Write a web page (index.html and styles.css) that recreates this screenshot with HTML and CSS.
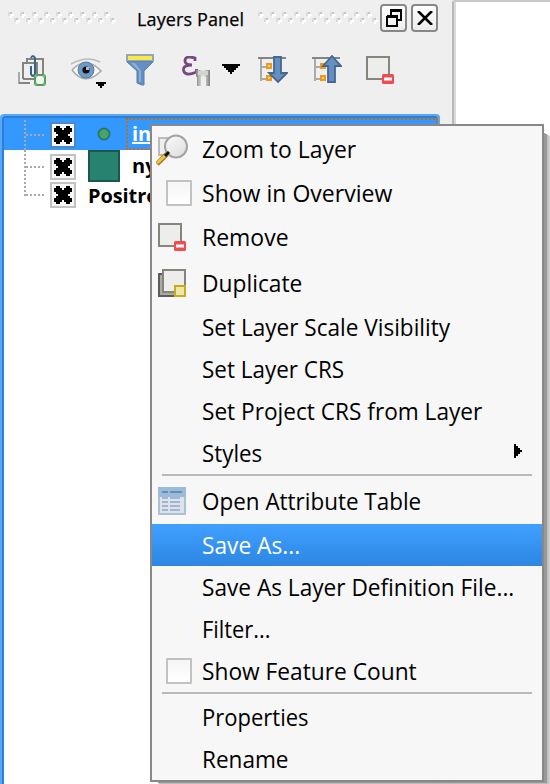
FILE: index.html
```html
<!DOCTYPE html>
<html lang="en">
<head>
<meta charset="utf-8">
<title>Layers Panel</title>
<link rel="stylesheet" href="styles.css">
</head>
<body>
<svg class="defs" width="0" height="0" aria-hidden="true">
  <defs>
    <pattern id="grip" width="12" height="12" patternUnits="userSpaceOnUse">
      <path fill="#fff" d="M2 2h4v2h-2v2h-2zM8 8h4v2h-2v2h-2z"/>
      <path fill="#dcdcdc" d="M0 0h4v2h-2v2h-2zM6 6h4v2h-2v2h-2z"/>
      <path fill="#c6c6c6" d="M2 0h2v2h-2zM8 6h2v2h-2z"/>
    </pattern>
    <linearGradient id="lens" x2="1" y2="1"><stop stop-color="#fafafa"/><stop offset="1" stop-color="#dcdcdc"/></linearGradient>
    <linearGradient id="metal"><stop stop-color="#888880"/><stop offset=".5" stop-color="#eee"/><stop offset="1" stop-color="#808078"/></linearGradient>
    <symbol id="cross" viewBox="0 0 18 18">
      <path d="M2 0h4v2h2v2h2V2h2V0h4v2h2v4h-2v2h-2v2h2v2h2v4h-2v2h-4v-2h-2v-2H8v2H6v2H2v-2H0v-4h2v-2h2V8H2V6H0V2h2z"/>
    </symbol>
    <symbol id="remove" viewBox="0 0 28 28">
      <path fill="#ededeb" stroke="#85857d" stroke-width="2" d="M1 1h22v22H1z"/>
      <rect x="16" y="18" width="12" height="10" rx="1.5" fill="#f04b50"/>
      <path fill="#fff" d="M18 21.5h8v3h-8z"/>
    </symbol>
    <symbol id="tree" viewBox="0 0 30 30">
      <path fill="none" stroke="#aaa" stroke-width="2" d="M3 4v22M3 12h6M3 24h6"/>
      <path stroke="#85857d" stroke-width="2" d="M0 3h28"/>
      <path fill="#fbdc4c" stroke="#f49522" stroke-width="2" d="M9 9h4v4H9zM9 21h4v4H9z"/>
    </symbol>
  </defs>
</svg>

<main class="window">
  <section class="panel">
    <header class="titlebar">
      <svg class="grip-left" width="108" height="12"><path fill="url(#grip)" d="M0 0h108v12H0z"/></svg>
      <h1 class="title"><span>Layers Panel</span></h1>
      <svg class="grip-right" width="120" height="12"><path fill="url(#grip)" d="M0 0h120v12H0z"/></svg>
      <div class="window-buttons">
        <button class="window-button" aria-label="Float"><svg width="16" height="18" fill="none" stroke="#000" stroke-width="2"><path d="M5 7V1h10v10h-4M1 9v8h10V7H1M4 2h12M0 8h12" /></svg></button>
        <button class="window-button" aria-label="Close"><svg width="16" height="14" stroke="#000" stroke-width="2.6"><path d="M1 0l14 14M15 0L1 14"/></svg></button>
      </div>
    </header>

    <div class="toolbar">
      <svg class="tool-group" width="28" height="32" fill="none" stroke="#858580" stroke-width="2">
        <path stroke="#aaa" d="M1 18v11h11"/><path d="M1 29h11M5 25V9h14v16H5M9 9V5h16v16"/>
        <path stroke="#36618e" d="M13 12v8q2 4 4 0V4q-2-4-4 0M17 4v17"/>
        <rect x="17" y="21" width="10" height="10" rx="2" fill="#f0f7f0" stroke="#559d59"/>
        <path stroke="#81b884" d="M17 21l2 2M27 21l-2 2M17 31l2-2M27 31l-2-2"/>
      </svg>
      <svg class="tool-eye" width="36" height="30">
        <path fill="#fff" stroke="#aaa9a4" stroke-width="1.7" d="M1 12Q15-3 30 13Q14 29 1 12"/>
        <path fill="none" stroke="#bcbbb5" stroke-width="1.6" d="M0 6Q16-3 29 4"/>
        <circle cx="15" cy="12" r="8" fill="#6c9bcb" stroke="#537ba6"/><circle cx="15" cy="12" r="3.6" fill="#111"/><path fill="#bbb" d="M15 9h3v3h-3z"/>
        <path d="M25 24h10v2h-2v2h-2v2h-2v-2h-2v-2h-2z"/>
      </svg>
      <svg class="tool-filter" width="28" height="32">
        <path fill="#648fc0" stroke="#557fac" d="M1 7h26v1L18 17v14h-2l-5-2V17L1 8z"/>
        <path fill="#8eb0d5" d="M5 9l8 8v11h2V17L9 9z"/><path fill="#96a8b4" d="M0 0h28v7H0z"/><path fill="#f8e84e" d="M2 2h24v4H2z"/>
      </svg>
      <svg class="tool-expression" width="28" height="30">
        <path fill="none" stroke="#77477f" stroke-width="2.8" d="M13 5V2Q3-1 3 5q0 4 7 4Q1 9 1.5 14q1 7 13 2v-3"/>
        <path fill="url(#metal)" d="M14 14h14v16h-4V21h-5v9h-4v-9h-1z"/><path fill="#d4d4cf" d="M16 15h10v4H16z"/>
      </svg>
      <svg class="tool-arrow" width="18" height="10"><path d="M0 0h18v2h-2v2h-2v2h-2v2h-2v2H8V8H6V6H4V4H2V2H0z"/></svg>
      <svg class="tool-expand" width="30" height="30"><use href="#tree" width="30" height="30"/><path fill="#648fc0" stroke="#45688e" stroke-width="1.8" d="M16 2h7v16h6l-9 9-9-9h5z"/></svg>
      <svg class="tool-collapse" width="30" height="30"><use href="#tree" width="30" height="30"/><path fill="#648fc0" stroke="#45688e" stroke-width="1.8" d="M16 27h7V11h6l-9-10-9 10h5z"/></svg>
      <svg class="tool-remove" width="28" height="28"><use href="#remove"/></svg>
    </div>

    <div class="layers">
      <div class="layer layer-selected">
        <svg class="branch" width="42" height="32" stroke="#a9a9a9" stroke-width="2" stroke-dasharray="2 2"><path d="M21 2v30M22 17h20"/></svg>
        <span class="checkbox"><svg width="18" height="18"><use href="#cross"/></svg></span>
        <svg class="point" width="14" height="14"><circle cx="7" cy="7" r="5.6" fill="#4aa564" stroke="#27756e" stroke-width="1.8"/></svg>
        <span class="name name-edit">in</span>
      </div>
      <div class="layer">
        <svg class="branch" width="42" height="32" stroke="#a9a9a9" stroke-width="2" stroke-dasharray="2 2"><path d="M21 0v32M22 17h20"/></svg>
        <span class="checkbox"><svg width="18" height="18"><use href="#cross"/></svg></span>
        <span class="swatch"></span>
        <span class="name name-polygon">ny</span>
      </div>
      <div class="layer layer-short">
        <svg class="branch" width="42" height="28" stroke="#a9a9a9" stroke-width="2" stroke-dasharray="2 2"><path d="M21 0v14M22 13h20"/></svg>
        <span class="checkbox"><svg width="18" height="18"><use href="#cross"/></svg></span>
        <span class="name name-base">Positron</span>
      </div>
    </div>
  </section>
  <section class="canvas"></section>
</main>

<nav class="menu">
  <div class="item item-icon">
    <svg class="icon icon-zoom" width="32" height="32"><path fill="#eee" stroke="#bbb" stroke-width="2" d="M3 4h16v17H3z"/><path stroke="#a77c28" stroke-width="5" d="M1 30l10-10"/><path stroke="#f3c541" stroke-width="3" d="M1 29l10-9"/><circle cx="20" cy="12.5" r="11" fill="url(#lens)" stroke="#a3a3a3" stroke-width="2"/><path stroke="#111" stroke-width="3" d="M9 22l4-4"/></svg>
    <span class="label l1">Zoom to Layer</span></div>
  <div class="item"><span class="menu-check"></span><span class="label l2">Show in Overview</span></div>
  <div class="item item-icon"><svg class="icon" width="28" height="28"><use href="#remove"/></svg><span class="label l3">Remove</span></div>
  <div class="item item-icon">
    <svg class="icon" width="28" height="28"><path fill="#a9aaa0" stroke="#5d5d57" stroke-width="2" d="M1 5h20v22H1z"/><path stroke="#85857d" stroke-width="2" fill="#ededeb" d="M5 1h22v22H5z"/><path fill="#eee7aa" stroke="#c9a91d" stroke-width="2" d="M17 17h10v10H17z"/></svg>
    <span class="label l4">Duplicate</span></div>
  <div class="item"><span class="label l5">Set Layer Scale Visibility</span></div>
  <div class="item"><span class="label l6">Set Layer CRS</span></div>
  <div class="item"><span class="label l7">Set Project CRS from Layer</span></div>
  <div class="item"><span class="label l8">Styles</span><svg class="submenu" width="8" height="14"><path d="M0 0h2v2h2v2h2v2h2v2H6v2H4v2H2v2H0z"/></svg></div>
  <div class="separator"></div>
  <div class="item item-icon">
    <svg class="icon" width="28" height="28"><rect width="28" height="28" rx="1" fill="#a8c0da"/><path fill="#9bbbd9" d="M0 0h28v10H0z"/><path fill="#dfe3e8" d="M2 10h24v16H2z"/><path stroke="#6290c1" stroke-width="2" d="M4 5h6m2 0h12"/><path stroke="#9eb7d4" stroke-width="2" d="M4 11h6m2 0h10M4 15h6m2 0h10M4 19h6m2 0h10M4 23h6m2 0h10"/></svg>
    <span class="label l9">Open Attribute Table</span></div>
  <div class="item item-active"><span class="label l10">Save As...</span></div>
  <div class="item"><span class="label l11">Save As Layer Definition File...</span></div>
  <div class="item"><span class="label l12">Filter...</span></div>
  <div class="item"><span class="menu-check"></span><span class="label l13">Show Feature Count</span></div>
  <div class="separator"></div>
  <div class="item"><span class="label l14">Properties</span></div>
  <div class="item"><span class="label l15">Rename</span></div>
</nav>
</body>
</html>
```
FILE: styles.css
```css
* { box-sizing: border-box; }
body { margin: 0; width: 550px; height: 784px; overflow: hidden; position: relative; background: #efefef; color: #000; font-family: "Open Sans", "Noto Sans", sans-serif; }
svg { display: block; flex: none; }
.defs { position: absolute; }
.window { display: flex; height: 784px; }
.panel { width: 452px; display: flex; flex-direction: column; flex: none; }
.canvas { flex: 1; background: #fff; border-left: 2px solid #b8b8b8; border-top: 2px solid #c8c8c8; border-top-left-radius: 3px; box-shadow: inset 2px 0 #dadada; }

.titlebar { height: 38px; display: flex; align-items: flex-start; padding-left: 8px; }
.grip-left, .grip-right { margin-top: 12px; }
.title { margin: 5px 0 0 21px; width: 121px; font-size: 18px; line-height: 28px; font-weight: 400; white-space: nowrap; }
.title span { display: inline-block; letter-spacing: .12px; -webkit-text-stroke: .25px #000; }
.window-buttons { display: flex; gap: 4px; margin: 4px 0 0 2px; }
.window-button { width: 27px; height: 28px; padding: 0; display: flex; align-items: center; justify-content: center; border: 2px solid #888; border-radius: 4px; background: linear-gradient(#fff, #ececec); }

.toolbar { height: 76px; display: flex; align-items: flex-start; padding: 16px 0 0 18px; }
.tool-eye { margin: 4px 0 0 25px; }
.tool-filter { margin-left: 19px; }
.tool-expression { margin: 2px 0 0 28px; }
.tool-arrow { margin: 10px 0 0 12px; }
.tool-expand { margin: 1px 0 0 18px; }
.tool-collapse { margin: 1px 0 0 24px; }
.tool-remove { margin: 2px 0 0 24px; }

.layers { width: 440px; flex: 1; background: #fff; border: 2px solid #59a7fa; border-bottom: 0; border-radius: 4px 4px 0 0; box-shadow: inset 2px 2px #2d7fd5; padding: 2px 0 0 2px; }
.layer { display: flex; align-items: center; height: 32px; white-space: nowrap; font-weight: 700; font-size: 20px; line-height: 28px; }
.layer-short { height: 28px; }
.layer-selected { background: #39f; color: #fff; }
.branch { fill: none; }
.checkbox { width: 26px; height: 26px; margin: 2px 0 0 4px; flex: none; display: flex; align-items: center; justify-content: center; background: #f6f6f6; border: 2px solid #c2c2c2; }
.layer-short .checkbox { margin-top: -2px; }
.layer-selected .checkbox { border-color: #4b88c7; }
.point { margin: 0 0 0 21px; }
.swatch { width: 32px; height: 32px; margin-left: 12px; flex: none; background: #27826f; border: 2px solid #17594d; }
.name-edit { margin-left: 15px; width: 312px; height: 32px; padding-left: 4px; border: 2px dotted #c96a12; text-decoration: underline; text-decoration-thickness: 2px; }
.name-polygon { margin-left: 12px; }
.name-base { margin-left: 12px; letter-spacing: -.1px; }

.menu { position: absolute; left: 150px; top: 124px; width: 394px; height: 658px; border: 2px solid #888; background: #f7f7f7; box-shadow: 4px 2px 0 -1px #999, 6px 4px 3px #bbb; clip-path: polygon(-2px -2px, 394px -2px, 394px 9px, 402px 13px, 402px 664px, 10px 664px, 8px 658px, -2px 658px); }
.item { position: relative; height: 42px; padding-left: 50px; display: flex; align-items: center; font-size: 24px; line-height: 36px; white-space: nowrap; }
.item-icon { height: 46px; }
.item-active { color: #fff; background: linear-gradient(#40a0ff, #2d86e2); }
.icon { position: absolute; left: 6px; top: 9px; }
.icon-zoom { left: 4px; top: 8px; }
.menu-check { position: absolute; left: 14px; top: 8px; width: 26px; height: 26px; background: linear-gradient(#f5f5f5, #fff); border: 2px solid #c2c2c2; border-radius: 1px; }
.label { display: inline-block; transform-origin: 0 50%; transform: scaleX(.93); }
.l1 { transform: scaleX(.955); }
.l2 { transform: scaleX(.96); }
.l3 { transform: scaleX(.957); }
.l4 { transform: scaleX(.949); }
.l5, .l15 { transform: scaleX(.94); }
.l6, .l9 { transform: scaleX(.935); }
.l7, .l11 { transform: scaleX(.943); }
.l10, .l13 { transform: scaleX(.947); }
.l12 { transform: scaleX(.91); }
.l14 { transform: scaleX(.917); }
.submenu { position: absolute; left: 362px; top: 12px; }
.separator { height: 4px; margin: 0 10px; border-top: 2px solid #b9b9b9; }
```
